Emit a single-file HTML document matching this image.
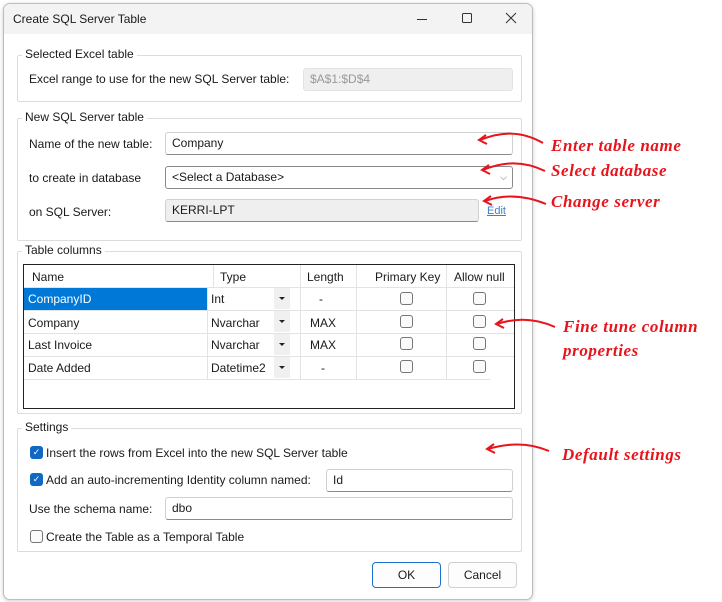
<!DOCTYPE html>
<html><head><meta charset="utf-8"><style>
*{box-sizing:border-box;margin:0;padding:0}
body{width:722px;height:602px;background:#fff;position:relative;overflow:hidden;font-family:"Liberation Sans",sans-serif;font-size:12px;color:#1a1a1a}
.a{position:absolute}
.dlg{left:3px;top:3px;width:530px;height:597px;border:1px solid #bdbdbd;border-radius:7px;background:#fff;overflow:hidden;box-shadow:0 1px 4px rgba(0,0,0,.2)}
.tb{left:0;top:0;width:100%;height:30px;background:#f3f3f3}
.grp{border:1px solid #dcdcdc;border-radius:2px}
.lg{background:#fff;padding:0 3px;font-size:12px}
.in{border:1px solid #d0d0d0;border-bottom:1px solid #8a8a8a;border-radius:3px;background:#fff;padding-left:6px;line-height:20px}
.gr{background:#efefef}
.cb{width:13px;height:13px;border:1px solid #767676;border-radius:3px;background:#fafafa}
.cbc{width:13px;height:13px;border-radius:3px;background:#1167c4;color:#fff;font-size:9px;text-align:center;line-height:13px}
.ann{color:#e8141c;font-family:"Liberation Serif",serif;font-style:italic;font-weight:bold;font-size:17px;letter-spacing:0.6px}
.btn{border:1px solid #d0d0d0;border-radius:4px;background:#fdfdfd;text-align:center;line-height:24px}
.dd{width:16px;height:21px;background:#f0f0f0}
.dd:after{content:"";position:absolute;left:5px;top:9px;border-left:3px solid transparent;border-right:3px solid transparent;border-top:3px solid #222}
</style></head><body>
<div class="a dlg">
 <div class="a tb"></div>
 <div class="a" style="left:9px;top:8px">Create SQL Server Table</div>
 <svg class="a" style="left:0;top:0" width="530" height="30"><g stroke="#333" stroke-width="1" fill="none">
 <path d="M413 15.5h10"/><rect x="458.5" y="9.5" width="9" height="9" rx="1"/><path d="M502 9l10 10M512 9l-10 10"/></g></svg>
</div>
<div class="a grp" style="left:17px;top:55px;width:505px;height:47px"></div>
<div class="a lg" style="left:22px;top:47px">Selected Excel table</div>
<div class="a" style="left:29px;top:72px">Excel range to use for the new SQL Server table:</div>
<div class="a in gr" style="left:303px;top:68px;width:210px;height:23px;border-color:#e3e3e3;color:#999">$A$1:$D$4</div>
<div class="a grp" style="left:17px;top:118px;width:505px;height:123px"></div>
<div class="a lg" style="left:22px;top:110px">New SQL Server table</div>
<div class="a" style="left:29px;top:137px">Name of the new table:</div>
<div class="a in" style="left:165px;top:132px;width:348px;height:23px">Company</div>
<div class="a" style="left:29px;top:171px">to create in database</div>
<div class="a in" style="left:165px;top:166px;width:348px;height:23px;border-color:#8a8a8a">&lt;Select a Database&gt;<span style="position:absolute;right:5px;top:0;font-size:9px;color:#666">⌵</span></div>
<div class="a" style="left:29px;top:205px">on SQL Server:</div>
<div class="a in gr" style="left:165px;top:199px;width:314px;height:23px">KERRI-LPT</div>
<div class="a" style="left:487px;top:205px;color:#3a7fd0;text-decoration:underline;font-size:11px">Edit</div>
<div class="a grp" style="left:17px;top:251px;width:505px;height:163px"></div>
<div class="a lg" style="left:22px;top:243px">Table columns</div>
<div class="a" style="left:23px;top:264px;width:492px;height:145px;border:1px solid #222;background:#fff">
 <div class="a" style="left:0;top:0;width:100%;height:23px;border-bottom:1px solid #e3e3e3"></div>
 <div class="a" style="left:8px;top:5px">Name</div>
 <div class="a" style="left:196px;top:5px">Type</div>
 <div class="a" style="left:283px;top:5px">Length</div>
 <div class="a" style="left:351px;top:5px">Primary Key</div>
 <div class="a" style="left:430px;top:5px">Allow null</div>
 <div class="a" style="left:183px;top:23px;width:1px;height:91px;background:#e3e3e3"></div>
 <div class="a" style="left:189px;top:0;width:1px;height:23px;background:#e3e3e3"></div>
 <div class="a" style="left:276px;top:0;width:1px;height:114px;background:#e3e3e3"></div>
 <div class="a" style="left:332px;top:0;width:1px;height:114px;background:#e3e3e3"></div>
 <div class="a" style="left:422px;top:0;width:1px;height:114px;background:#e3e3e3"></div>
 <div class="a" style="left:0;top:23px;width:183px;height:22px;background:#0078d7"></div>
 <div class="a" style="left:0;top:45px;width:100%;height:1px;background:#e3e3e3"></div>
 <div class="a" style="left:0;top:68px;width:100%;height:1px;background:#e3e3e3"></div>
 <div class="a" style="left:0;top:91px;width:100%;height:1px;background:#e3e3e3"></div>
 <div class="a" style="left:0;top:114px;width:466px;height:1px;background:#e3e3e3"></div>
</div>
<div class="a" style="left:28px;top:292px;color:#fff">CompanyID</div>
<div class="a" style="left:28px;top:316px">Company</div>
<div class="a" style="left:28px;top:338px">Last Invoice</div>
<div class="a" style="left:28px;top:361px">Date Added</div>
<div class="a" style="left:211px;top:292px">Int</div>
<div class="a" style="left:211px;top:316px">Nvarchar</div>
<div class="a" style="left:211px;top:338px">Nvarchar</div>
<div class="a" style="left:211px;top:361px">Datetime2</div>
<div class="a dd" style="left:274px;top:288px"></div>
<div class="a dd" style="left:274px;top:311px"></div>
<div class="a dd" style="left:274px;top:334px"></div>
<div class="a dd" style="left:274px;top:357px"></div>
<div class="a" style="left:319px;top:292px">-</div>
<div class="a" style="left:310px;top:316px">MAX</div>
<div class="a" style="left:310px;top:338px">MAX</div>
<div class="a" style="left:321px;top:361px">-</div>
<div class="a cb" style="left:400px;top:292px"></div><div class="a cb" style="left:473px;top:292px"></div>
<div class="a cb" style="left:400px;top:315px"></div><div class="a cb" style="left:473px;top:315px"></div>
<div class="a cb" style="left:400px;top:337px"></div><div class="a cb" style="left:473px;top:337px"></div>
<div class="a cb" style="left:400px;top:360px"></div><div class="a cb" style="left:473px;top:360px"></div>
<div class="a grp" style="left:17px;top:428px;width:505px;height:124px"></div>
<div class="a lg" style="left:22px;top:420px">Settings</div>
<div class="a cbc" style="left:30px;top:446px">✓</div>
<div class="a" style="left:46px;top:446px">Insert the rows from Excel into the new SQL Server table</div>
<div class="a cbc" style="left:30px;top:473px">✓</div>
<div class="a" style="left:46px;top:473px">Add an auto-incrementing Identity column named:</div>
<div class="a in" style="left:326px;top:469px;width:187px;height:23px">Id</div>
<div class="a" style="left:29px;top:502px">Use the schema name:</div>
<div class="a in" style="left:165px;top:497px;width:348px;height:23px">dbo</div>
<div class="a cb" style="left:30px;top:530px"></div>
<div class="a" style="left:46px;top:530px">Create the Table as a Temporal Table</div>
<div class="a btn" style="left:372px;top:562px;width:69px;height:26px;border-color:#1d73c9">OK</div>
<div class="a btn" style="left:448px;top:562px;width:69px;height:26px">Cancel</div>
<svg class="a" style="left:0;top:0" width="722" height="602">
<g fill="none" stroke="#e8141c" stroke-width="2">
<path d="M543 143 C520 130 500 132 480 140"/><path d="M486 135 L479 140 L487 144"/>
<path d="M545 171 C522 160 502 162 483 170"/><path d="M489 165 L482 170 L490 174"/>
<path d="M546 204 C522 194 502 195 485 201"/><path d="M491 196 L484 201 L492 205"/>
<path d="M555 327 C535 318 515 318 497 324"/><path d="M503 319 L496 324 L504 328"/>
<path d="M549 451 C528 442 508 443 488 449"/><path d="M494 444 L487 449 L495 453"/>
</g></svg>
<div class="a ann" style="left:551px;top:136px">Enter table name</div>
<div class="a ann" style="left:551px;top:161px">Select database</div>
<div class="a ann" style="left:551px;top:192px">Change server</div>
<div class="a ann" style="left:563px;top:317px">Fine tune column</div>
<div class="a ann" style="left:563px;top:341px">properties</div>
<div class="a ann" style="left:562px;top:445px">Default settings</div>
</body></html>
